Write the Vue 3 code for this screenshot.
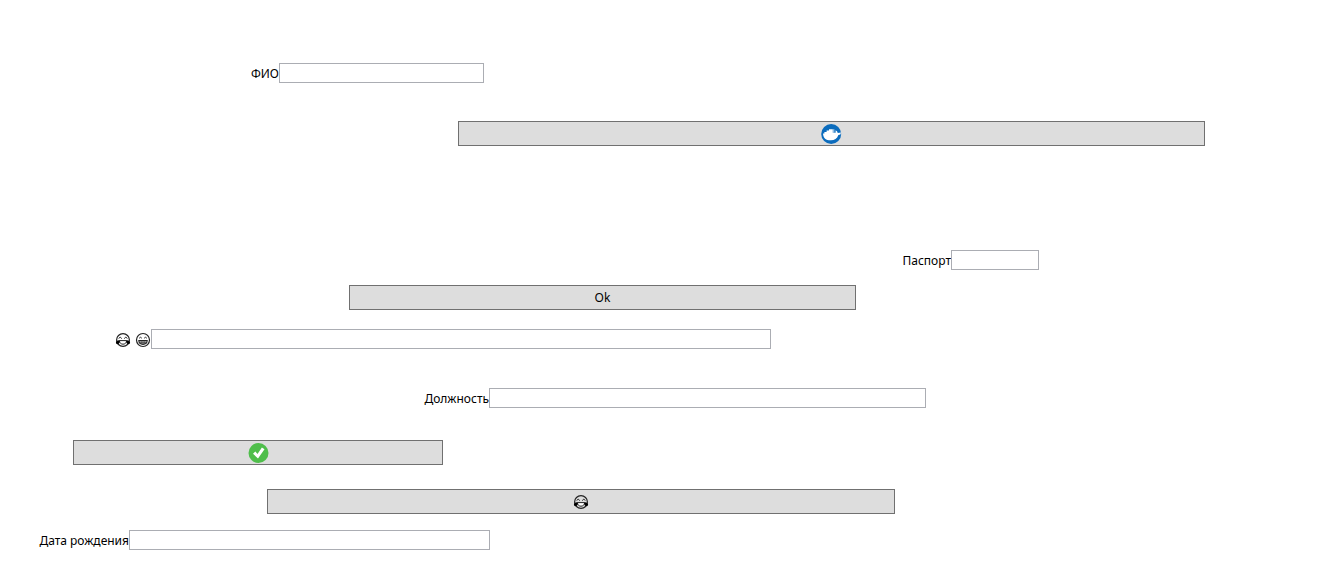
<script setup>
import { reactive } from 'vue'

const rows = reactive([
  { id: 'name', kind: 'field', label: 'ФИО', value: '', start: 279, span: 205, gap: 63 },
  { id: 'docker', kind: 'button', icon: 'whale', name: 'Docker', start: 458, span: 747, gap: 38 },
  { id: 'passport', kind: 'field', label: 'Паспорт', value: '', start: 951, span: 88, gap: 104 },
  { id: 'ok', kind: 'button', text: 'Ok', start: 349, span: 507, gap: 15 },
  { id: 'mood', kind: 'field', emoji: true, value: '', start: 151, span: 620, gap: 19 },
  { id: 'position', kind: 'field', label: 'Должность', value: '', start: 489, span: 437, gap: 39 },
  { id: 'confirm', kind: 'button', icon: 'check', name: 'Подтвердить', start: 73, span: 370, gap: 32 },
  { id: 'laugh', kind: 'button', icon: 'joy', name: 'Смех', start: 267, span: 628, gap: 24 },
  { id: 'birth', kind: 'field', label: 'Дата рождения', value: '', start: 129, span: 361, gap: 16 }
])

const rowStyle = (row) => ({
  marginTop: `${row.gap}px`,
  gridTemplateColumns: `${row.start}fr ${row.span}fr ${1318 - row.start - row.span}fr`
})
</script>

<template>
  <svg class="defs" aria-hidden="true">
    <symbol id="joy" viewBox="0 0 16 16">
      <circle cx="8" cy="8" r="6.4" fill="none" stroke="#222" stroke-width="1.2" />
      <path d="M3.8 6.6L5.2 5L6.8 6.6M9.2 6.6L10.8 5L12.2 6.6" fill="none" stroke="#222" stroke-width="1" />
      <path d="M4.4 8.6H11.6C11.6 13.4 4.4 13.4 4.4 8.6Z" fill="#fff" stroke="#222" stroke-width="1" />
      <path d="M4.6 8.2C2.4 8 .9 9 .9 10.8C1.1 12.6 3.8 12.6 4.6 10.8Z M11.4 8.2C13.6 8 15.1 9 15.1 10.8C14.9 12.6 12.2 12.6 11.4 10.8Z" fill="#000" />
    </symbol>
    <symbol id="grin" viewBox="0 0 16 16">
      <circle cx="8" cy="8" r="6.5" fill="none" stroke="#222" stroke-width="1.2" />
      <path d="M4.2 6.2Q5.5 4.3 6.8 6.2M9.2 6.2Q10.5 4.3 11.8 6.2" fill="none" stroke="#222" stroke-width="1" />
      <path d="M3.8 8.5H12.2C12 13.6 4 13.6 3.8 8.5Z" fill="#aaa" stroke="#222" stroke-width="1.1" />
      <path d="M4.5 10.4H11.5M6.3 8.5V12M8 8.5V12.4M9.7 8.5V12" stroke="#333" stroke-width=".5" />
    </symbol>
    <symbol id="check" viewBox="0 0 20 20">
      <circle cx="10" cy="10" r="10" fill="#4fbe4b" />
      <path d="M4.5 10.8L6.8 8.6L9 11L13.4 4.5L16 6.3L9.5 15.4Z" fill="#fff" />
    </symbol>
    <symbol id="whale" viewBox="0 0 21 20">
      <circle cx="10.2" cy="10" r="10" fill="#0b6cbd" />
      <path d="M2 9.4H3.4V8H5.6V6.4H8V5.2H11.8V8.8H14.6V6.2L16 7.2L16.8 8.9L20 8.6L19.4 10.4L17.4 11C16 14.8 13.4 16.4 9.6 16.3C5 16.2 2.2 14 2 9.4Z" fill="#fff" />
      <path d="M12.8 5.2V8.8" stroke="#fff" stroke-width=".8" />
    </symbol>
  </svg>
  <form class="form" @submit.prevent>
    <div v-for="row in rows" :key="row.id" class="row" :style="rowStyle(row)">
      <template v-if="row.kind === 'field'">
        <label class="label" :for="row.id">
          <span v-if="row.emoji" class="emojis" role="img" aria-label="😂 😁">
            <svg class="emoji"><use href="#joy" /></svg>
            <svg class="emoji"><use href="#grin" /></svg>
          </span>
          <template v-else>{{ row.label }}</template>
        </label>
        <input :id="row.id" v-model="row.value" class="input" type="text" />
      </template>
      <button v-else class="button" type="button" :aria-label="row.name">
        <svg v-if="row.icon" :class="row.icon === 'joy' ? 'emoji' : 'icon'"><use :href="'#' + row.icon" /></svg>
        <template v-else>{{ row.text }}</template>
      </button>
    </div>
  </form>
</template>

<style>
body {
  background: #fff;
}
</style>

<style scoped>
.defs {
  position: absolute;
  width: 0;
  height: 0;
}

.form {
  display: flow-root;
  font-family: "Noto Sans", "Open Sans", sans-serif;
  font-size: 12px;
  line-height: 16px;
  color: #000;
}

.row {
  display: grid;
  align-items: center;
}

.label {
  justify-self: end;
  padding-top: 2px;
  white-space: nowrap;
}

.input {
  box-sizing: border-box;
  width: 100%;
  min-width: 0;
  height: 20px;
  margin: 0;
  padding: 0 3px;
  border: 1px solid #abadb3;
  border-radius: 0;
  background: #fff;
  font: inherit;
}

.button {
  grid-column: 2;
  display: flex;
  align-items: center;
  justify-content: center;
  height: 25px;
  padding: 0;
  border: 1px solid #707070;
  border-radius: 0;
  background: #ddd;
  color: inherit;
  font: inherit;
}

.emojis {
  display: flex;
  gap: 4px;
}

.emoji {
  display: block;
  width: 16px;
  height: 16px;
}

.icon {
  display: block;
  width: 21px;
  height: 20px;
}
</style>
